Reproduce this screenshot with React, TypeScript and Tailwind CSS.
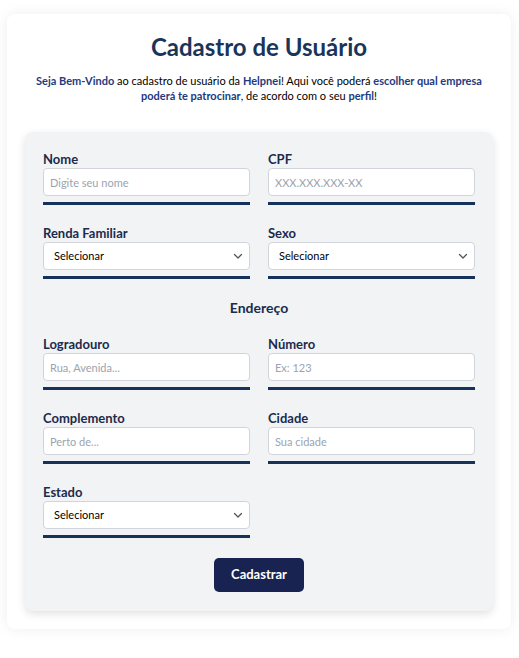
import React from "react";

const font = { fontFamily: 'Lato, "Noto Sans", sans-serif' };

function Bar() {
  return <div className="mt-[6px] h-[3px] bg-[#17325a]" />;
}

function Field({ label, placeholder }: { label: string; placeholder: string }) {
  return (
    <div className="flex flex-col">
      <label className="text-[13px] leading-[17px] font-bold text-[#1c2b4b]">{label}</label>
      <input
        placeholder={placeholder}
        className="h-[28px] w-full rounded-[4px] border border-[#d1d5db] bg-white px-[6px] text-[11px] text-black placeholder:text-[#9ca3af] outline-none"
        style={font}
      />
      <Bar />
    </div>
  );
}

function SelectField({ label }: { label: string }) {
  return (
    <div className="flex flex-col">
      <label className="text-[13px] leading-[17px] font-bold text-[#1c2b4b]">{label}</label>
      <div className="relative h-[28px] w-full rounded-[4px] border border-[#d1d5db] bg-white flex items-center px-[10px]">
        <span className="text-[11px] text-black">Selecionar</span>
        <svg
          className="absolute right-[5px] top-1/2 -translate-y-1/2"
          width="12"
          height="12"
          viewBox="0 0 12 12"
          fill="none"
        >
          <path d="M2.5 4.5 L6 8 L9.5 4.5" stroke="#555" strokeWidth="1.3" strokeLinecap="round" strokeLinejoin="round" />
        </svg>
      </div>
      <Bar />
    </div>
  );
}

export default function App() {
  return (
    <div className="min-h-[658px] bg-white pt-[14px] px-[7px]" style={font}>
      <div className="w-[504px] rounded-[8px] bg-white shadow-[0_0_14px_rgba(0,0,0,0.07)] px-[18px] pt-[17px] pb-[18px]">
        <h1 className="text-center text-[24px] leading-[32px] font-bold text-[#1b345a]">Cadastro de Usuário</h1>
        <p className="mt-[10px] text-center text-[11px] leading-[15px] text-black px-[10px]">
          <span className="font-bold text-[#1e3a80]">Seja Bem-Vindo</span> ao cadastro de usuário da{" "}
          <span className="font-bold text-[#1e3a80]">Helpnei</span>! Aqui você poderá{" "}
          <span className="font-bold text-[#1e3a80]">escolher qual empresa</span>{" "}
          <span className="font-bold text-[#1e3a80]">poderá te patrocinar</span>, de acordo com o seu{" "}
          <span className="font-bold text-[#1e3a80]">perfil</span>!
        </p>
        <div className="mt-[29px] rounded-[8px] bg-[#f2f3f5] shadow-[0_3px_8px_rgba(0,0,0,0.12)] px-[18px] pt-[19px] pb-[19px] flex flex-col gap-[20px]">
          <div className="grid grid-cols-2 gap-x-[18px] gap-y-[20px]">
            <Field label="Nome" placeholder="Digite seu nome" />
            <Field label="CPF" placeholder="XXX.XXX.XXX-XX" />
            <SelectField label="Renda Familiar" />
            <SelectField label="Sexo" />
          </div>
          <h2 className="text-center text-[14px] leading-[17px] font-bold text-[#1c2b4b]">Endereço</h2>
          <div className="grid grid-cols-2 gap-x-[18px] gap-y-[20px]">
            <Field label="Logradouro" placeholder="Rua, Avenida..." />
            <Field label="Número" placeholder="Ex: 123" />
            <Field label="Complemento" placeholder="Perto de..." />
            <Field label="Cidade" placeholder="Sua cidade" />
            <SelectField label="Estado" />
          </div>
          <div className="flex justify-center">
            <button className="h-[34px] w-[90px] rounded-[5px] bg-[#192352] text-white text-[13px] font-bold">Cadastrar</button>
          </div>
        </div>
      </div>
    </div>
  );
}
